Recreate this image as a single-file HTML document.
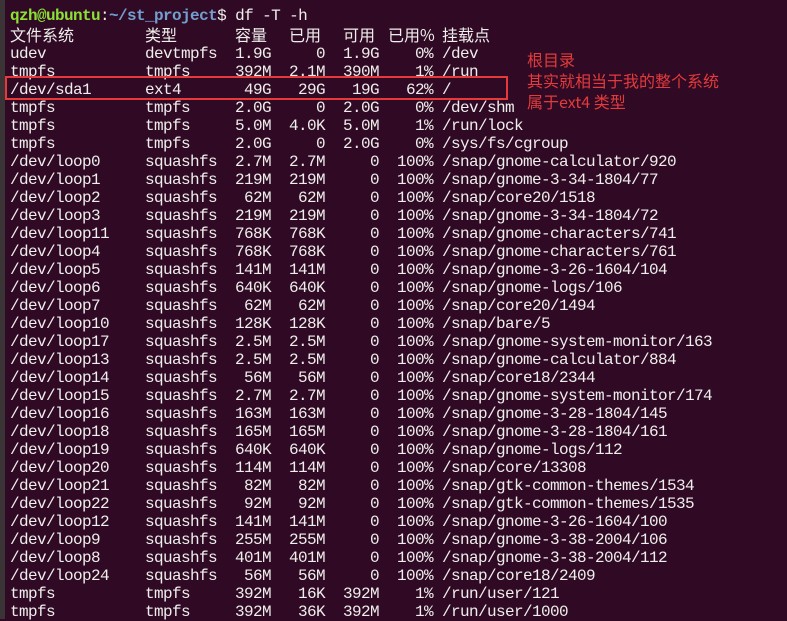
<!DOCTYPE html>
<html><head><meta charset="utf-8"><style>
html,body{margin:0;padding:0;}
body{width:787px;height:619px;background:#300a24;position:relative;overflow:hidden;font-family:"Liberation Mono","Noto Sans CJK SC",monospace;font-size:16px;letter-spacing:-0.6px;color:#eeeeec;}
.stripe{position:absolute;left:0;top:0;width:5px;height:619px;background:#3b3437;}
.r{position:absolute;left:0;height:18px;line-height:18px;width:787px;white-space:pre;}
.r span{position:absolute;top:0;}
.c1{left:10px}.c2{left:145px}
.c3{right:516px}.c4{right:462px}.c5{right:408px}.c6{right:354px}
.c7{left:442px}
.cj{font-family:"Noto Sans CJK SC",sans-serif;font-size:16px;letter-spacing:0;}
.box{position:absolute;left:5px;top:76px;width:499px;height:20px;border:2px solid #e8393a;}
.note{position:absolute;left:527px;color:#e23b3b;font-family:"Noto Sans CJK SC",sans-serif;font-size:16px;line-height:21px;top:49px;letter-spacing:0;}
</style></head><body>
<div class="stripe"></div>
<div class="r" style="top:7px"><span class="c1"><b style="color:#8ae234">qzh@ubuntu</b>:<b style="color:#729fcf">~/st_project</b>$ df -T -h</span></div>
<div class="r cj" style="top:25px"><span class="c1">文件系统</span><span class="c2">类型</span><span style="left:235px">容量</span><span style="left:289px">已用</span><span style="left:343px">可用</span><span style="left:388px">已用%</span><span style="left:442px">挂载点</span></div>
<div id="rows"></div>
<div class="box"></div>
<div class="note">根目录<br>其实就相当于我的整个系统<br>属于ext4 类型</div>
<script>
var d=[
["udev","devtmpfs","1.9G","0","1.9G","0%","/dev"],
["tmpfs","tmpfs","392M","2.1M","390M","1%","/run"],
["/dev/sda1","ext4","49G","29G","19G","62%","/"],
["tmpfs","tmpfs","2.0G","0","2.0G","0%","/dev/shm"],
["tmpfs","tmpfs","5.0M","4.0K","5.0M","1%","/run/lock"],
["tmpfs","tmpfs","2.0G","0","2.0G","0%","/sys/fs/cgroup"],
["/dev/loop0","squashfs","2.7M","2.7M","0","100%","/snap/gnome-calculator/920"],
["/dev/loop1","squashfs","219M","219M","0","100%","/snap/gnome-3-34-1804/77"],
["/dev/loop2","squashfs","62M","62M","0","100%","/snap/core20/1518"],
["/dev/loop3","squashfs","219M","219M","0","100%","/snap/gnome-3-34-1804/72"],
["/dev/loop11","squashfs","768K","768K","0","100%","/snap/gnome-characters/741"],
["/dev/loop4","squashfs","768K","768K","0","100%","/snap/gnome-characters/761"],
["/dev/loop5","squashfs","141M","141M","0","100%","/snap/gnome-3-26-1604/104"],
["/dev/loop6","squashfs","640K","640K","0","100%","/snap/gnome-logs/106"],
["/dev/loop7","squashfs","62M","62M","0","100%","/snap/core20/1494"],
["/dev/loop10","squashfs","128K","128K","0","100%","/snap/bare/5"],
["/dev/loop17","squashfs","2.5M","2.5M","0","100%","/snap/gnome-system-monitor/163"],
["/dev/loop13","squashfs","2.5M","2.5M","0","100%","/snap/gnome-calculator/884"],
["/dev/loop14","squashfs","56M","56M","0","100%","/snap/core18/2344"],
["/dev/loop15","squashfs","2.7M","2.7M","0","100%","/snap/gnome-system-monitor/174"],
["/dev/loop16","squashfs","163M","163M","0","100%","/snap/gnome-3-28-1804/145"],
["/dev/loop18","squashfs","165M","165M","0","100%","/snap/gnome-3-28-1804/161"],
["/dev/loop19","squashfs","640K","640K","0","100%","/snap/gnome-logs/112"],
["/dev/loop20","squashfs","114M","114M","0","100%","/snap/core/13308"],
["/dev/loop21","squashfs","82M","82M","0","100%","/snap/gtk-common-themes/1534"],
["/dev/loop22","squashfs","92M","92M","0","100%","/snap/gtk-common-themes/1535"],
["/dev/loop12","squashfs","141M","141M","0","100%","/snap/gnome-3-26-1604/100"],
["/dev/loop9","squashfs","255M","255M","0","100%","/snap/gnome-3-38-2004/106"],
["/dev/loop8","squashfs","401M","401M","0","100%","/snap/gnome-3-38-2004/112"],
["/dev/loop24","squashfs","56M","56M","0","100%","/snap/core18/2409"],
["tmpfs","tmpfs","392M","16K","392M","1%","/run/user/121"],
["tmpfs","tmpfs","392M","36K","392M","1%","/run/user/1000"]];
var h="";
for(var i=0;i<d.length;i++){var r=d[i];
h+='<div class="r" style="top:'+(45+18*i)+'px"><span class="c1">'+r[0]+'</span><span class="c2">'+r[1]+'</span><span class="c3">'+r[2]+'</span><span class="c4">'+r[3]+'</span><span class="c5">'+r[4]+'</span><span class="c6">'+r[5]+'</span><span class="c7">'+r[6]+'</span></div>';}
document.getElementById("rows").outerHTML=h;
</script>
</body></html>
